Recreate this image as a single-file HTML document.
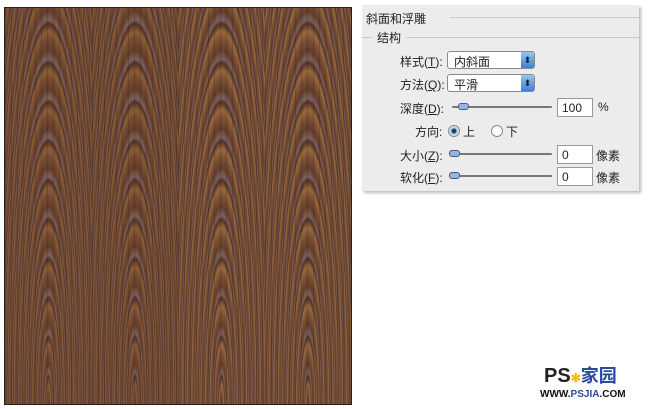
<!DOCTYPE html>
<html><head><meta charset="utf-8"><style>
body{margin:0;width:650px;height:409px;background:#fff;position:relative;overflow:hidden;font-family:"Liberation Sans","Noto Sans CJK SC",sans-serif;font-size:12px;color:#222}
#img{position:absolute;left:4px;top:7px;width:346px;height:396px;border:1px solid #222;background:#6a4330;overflow:hidden;display:flex}
.col{flex:1;height:100%;background:
repeating-linear-gradient(90deg,rgba(60,35,25,.25) 0 1px,rgba(0,0,0,0) 1px 3px,rgba(150,100,60,.15) 3px 4px,rgba(0,0,0,0) 4px 6px),
repeating-radial-gradient(ellipse 46px 392px at 50% 100%,#5e3b2a 0%,#73492f 3%,#8a5d38 5%,#4f3124 7%,#7a6060 8%,#674130 10%),
#6a4330}
.col:nth-child(3),.col:nth-child(4){background:
repeating-linear-gradient(90deg,rgba(60,35,25,.25) 0 1px,rgba(0,0,0,0) 1px 3px,rgba(150,100,60,.15) 3px 4px,rgba(0,0,0,0) 4px 6px),
repeating-radial-gradient(ellipse 46px 392px at 50% 100%,#5e3b2a 0%,#7a4f33 3%,#98683d 5%,#4f3124 7%,#7a6060 8%,#674130 10%),#6a4330}
#panel{position:absolute;left:362px;top:5px;width:277px;height:186px;background:#ececec;box-shadow:2px 2px 3px #bbb}
.t{position:absolute;white-space:nowrap}
.line{position:absolute;height:1px;background:#c8c8c8}
.dd{position:absolute;width:86px;height:16px;background:#fff;border:1px solid #8a8a8a;border-radius:3px}
.dd span{position:absolute;left:6px;top:1px}
.dd i{position:absolute;right:0;top:0;width:13px;height:16px;background:linear-gradient(#9cc4f0,#3d7fd6);border-radius:0 2px 2px 0;color:#123;font-style:normal;font-size:9px;text-align:center;line-height:16px}
.sl{position:absolute;height:2px;background:#777;border-radius:1px;width:100px}
.kn{position:absolute;width:9px;height:5px;background:#8fb7e8;border:1px solid #557;border-radius:3px;top:-3px}
.in{position:absolute;width:34px;height:17px;background:#fff;border:1px solid #999}
.in span{position:absolute;left:4px;top:2px}
.rd{position:absolute;width:10px;height:10px;border:1px solid #888;border-radius:50%;background:#fff}
</style></head><body>
<div id="img"><div class="col"></div><div class="col"></div><div class="col"></div><div class="col"></div></div>
<div id="panel">
<div class="t" style="left:4px;top:5px">斜面和浮雕</div>
<div class="line" style="left:88px;top:12px;width:189px"></div>
<div class="line" style="left:0;top:32px;width:10px"></div>
<div class="t" style="left:15px;top:24px">结构</div>
<div class="line" style="left:44px;top:32px;width:233px"></div>
<div class="t" style="left:38px;top:48px">样式(<u>T</u>):</div>
<div class="dd" style="left:85px;top:46px"><span>内斜面</span><i>⬍</i></div>
<div class="t" style="left:38px;top:71px">方法(<u>Q</u>):</div>
<div class="dd" style="left:85px;top:69px"><span>平滑</span><i>⬍</i></div>
<div class="t" style="left:38px;top:95px">深度(<u>D</u>):</div>
<div class="sl" style="left:90px;top:101px"><div class="kn" style="left:6px"></div></div>
<div class="in" style="left:195px;top:93px"><span>100</span></div>
<div class="t" style="left:236px;top:95px">%</div>
<div class="t" style="left:53px;top:118px">方向:</div>
<div class="rd" style="left:86px;top:120px;background:radial-gradient(#245 30%,#9cc4f0 40%,#fff 80%)"></div>
<div class="t" style="left:101px;top:118px">上</div>
<div class="rd" style="left:129px;top:120px"></div>
<div class="t" style="left:144px;top:118px">下</div>
<div class="t" style="left:38px;top:142px">大小(<u>Z</u>):</div>
<div class="sl" style="left:87px;top:148px;width:103px"><div class="kn" style="left:0"></div></div>
<div class="in" style="left:195px;top:140px"><span>0</span></div>
<div class="t" style="left:234px;top:142px">像素</div>
<div class="t" style="left:38px;top:164px">软化(<u>F</u>):</div>
<div class="sl" style="left:87px;top:170px;width:103px"><div class="kn" style="left:0"></div></div>
<div class="in" style="left:195px;top:162px"><span>0</span></div>
<div class="t" style="left:234px;top:164px">像素</div>
</div>
<div class="t" style="left:544px;top:362px;font-weight:bold;font-size:20px;color:#222">PS<span style="color:#f5b000;font-size:12px">✻</span><span style="color:#2a4a9a;font-size:18px">家园</span></div>
<div class="t" style="left:540px;top:389px;font-weight:bold;font-size:10px;color:#111">WWW.<span style="color:#2a4a9a">PSJIA</span>.COM</div>
</body></html>
